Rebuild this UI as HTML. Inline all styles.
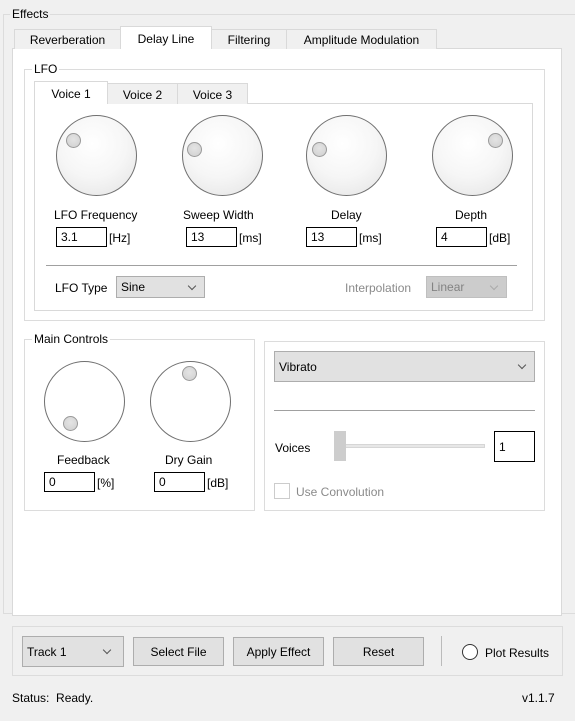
<!DOCTYPE html><html><head><style>
body{margin:0;width:575px;height:721px;background:#f0f0f0;font-family:"Liberation Sans",sans-serif;font-size:12px;color:#000;position:relative;overflow:hidden}
.a{position:absolute;box-sizing:border-box}
.t{position:absolute;white-space:nowrap}
.tab{position:absolute;box-sizing:border-box;border:1px solid #d9d9d9;border-bottom:none;background:#f0f0f0;text-align:center;line-height:20px}
.knob{position:absolute;border-radius:50%;border:1px solid #707070;box-sizing:border-box;background:radial-gradient(circle at 45% 35%,#fff 0%,#f6f6f6 50%,#e2e2e2 100%)}
.dot{position:absolute;width:15px;height:15px;border-radius:50%;border:1px solid #9a9a9a;box-sizing:border-box;background:radial-gradient(circle at 50% 40%,#e4e4e4,#cfcfcf)}
.in{position:absolute;box-sizing:border-box;border:1px solid #000;background:#fff;padding-left:4px;line-height:18px}
.cb{position:absolute;box-sizing:border-box;border:1px solid #adadad;background:#e1e1e1;padding-left:4px}
.btn{position:absolute;box-sizing:border-box;border:1px solid #adadad;background:#e1e1e1;text-align:center}
.chev{position:absolute;width:5px;height:5px;border-right:1px solid #555;border-bottom:1px solid #555;transform:rotate(45deg)}
</style></head><body>
<div class="a" style="left:3px;top:14px;width:580px;height:600px;border:1px solid #dcdcdc"></div>
<div class="t" style="left:10px;top:7px;background:#f0f0f0;padding:0 2px">Effects</div>
<div class="a" style="left:12px;top:48px;width:550px;height:568px;background:#fff;border:1px solid #d9d9d9"></div>
<div class="tab" style="left:14px;top:29px;width:107px;height:20px">Reverberation</div>
<div class="tab" style="left:120px;top:26px;width:92px;height:23px;background:#fff;line-height:25px">Delay Line</div>
<div class="tab" style="left:211px;top:29px;width:76px;height:20px">Filtering</div>
<div class="tab" style="left:286px;top:29px;width:151px;height:20px">Amplitude Modulation</div>
<div class="a" style="left:24px;top:69px;width:521px;height:252px;border:1px solid #dcdcdc"></div>
<div class="t" style="left:32px;top:62px;background:#fff;padding:0 2px">LFO</div>
<div class="a" style="left:34px;top:103px;width:499px;height:208px;border:1px solid #d9d9d9;border-top:1px solid #d9d9d9"></div>
<div class="tab" style="left:107px;top:83px;width:71px;height:21px;line-height:22px">Voice 2</div>
<div class="tab" style="left:177px;top:83px;width:71px;height:21px;line-height:22px">Voice 3</div>
<div class="tab" style="left:34px;top:81px;width:74px;height:23px;background:#fff;line-height:25px">Voice 1</div>
<div class="knob" style="left:56px;top:115px;width:81px;height:81px"></div><div class="dot" style="left:66px;top:133px"></div>
<div class="knob" style="left:182px;top:115px;width:81px;height:81px"></div><div class="dot" style="left:187px;top:142px"></div>
<div class="knob" style="left:306px;top:115px;width:81px;height:81px"></div><div class="dot" style="left:312px;top:142px"></div>
<div class="knob" style="left:432px;top:115px;width:81px;height:81px"></div><div class="dot" style="left:488px;top:133px"></div>
<div class="t" style="left:54px;top:208px">LFO Frequency</div>
<div class="t" style="left:183px;top:208px">Sweep Width</div>
<div class="t" style="left:331px;top:208px">Delay</div>
<div class="t" style="left:455px;top:208px">Depth</div>
<div class="in" style="left:56px;top:227px;width:51px;height:20px">3.1</div><div class="t" style="left:109px;top:231px">[Hz]</div>
<div class="in" style="left:186px;top:227px;width:51px;height:20px">13</div><div class="t" style="left:239px;top:231px">[ms]</div>
<div class="in" style="left:306px;top:227px;width:51px;height:20px">13</div><div class="t" style="left:359px;top:231px">[ms]</div>
<div class="in" style="left:436px;top:227px;width:51px;height:20px">4</div><div class="t" style="left:489px;top:231px">[dB]</div>
<div class="a" style="left:46px;top:265px;width:471px;height:1px;background:#a0a0a0"></div>
<div class="t" style="left:55px;top:281px">LFO Type</div>
<div class="cb" style="left:116px;top:276px;width:89px;height:22px;line-height:20px">Sine</div><div class="chev" style="left:189px;top:283px"></div>
<div class="t" style="left:345px;top:281px;color:#8a8a8a">Interpolation</div>
<div class="cb" style="left:426px;top:276px;width:81px;height:22px;line-height:20px;background:#ccc;border-color:#bfbfbf;color:#838383">Linear</div><div class="chev" style="left:491px;top:283px;border-color:#aaa"></div>
<div class="a" style="left:24px;top:339px;width:231px;height:172px;border:1px solid #dcdcdc"></div>
<div class="t" style="left:32px;top:332px;background:#fff;padding:0 2px">Main Controls</div>
<div class="a" style="left:44px;top:361px;width:81px;height:81px;border-radius:50%;border:1px solid #707070"></div><div class="dot" style="left:63px;top:416px"></div>
<div class="a" style="left:150px;top:361px;width:81px;height:81px;border-radius:50%;border:1px solid #707070"></div><div class="dot" style="left:182px;top:366px"></div>
<div class="t" style="left:57px;top:453px">Feedback</div>
<div class="t" style="left:165px;top:453px">Dry Gain</div>
<div class="in" style="left:44px;top:472px;width:51px;height:20px">0</div><div class="t" style="left:97px;top:476px">[%]</div>
<div class="in" style="left:154px;top:472px;width:51px;height:20px">0</div><div class="t" style="left:207px;top:476px">[dB]</div>
<div class="a" style="left:264px;top:341px;width:281px;height:170px;border:1px solid #dcdcdc"></div>
<div class="cb" style="left:274px;top:351px;width:261px;height:31px;line-height:31px">Vibrato</div><div class="chev" style="left:519px;top:362px"></div>
<div class="a" style="left:274px;top:410px;width:261px;height:1px;background:#a0a0a0"></div>
<div class="t" style="left:275px;top:441px">Voices</div>
<div class="a" style="left:340px;top:444px;width:145px;height:4px;background:#e7e7e7;border:1px solid #d6d6d6"></div>
<div class="a" style="left:334px;top:431px;width:12px;height:30px;background:#cdcdcd"></div>
<div class="in" style="left:494px;top:431px;width:41px;height:31px;line-height:31px">1</div>
<div class="a" style="left:274px;top:483px;width:16px;height:16px;border:1px solid #ccc;background:#fff"></div>
<div class="t" style="left:296px;top:485px;color:#8a8a8a">Use Convolution</div>
<div class="a" style="left:12px;top:626px;width:551px;height:50px;border:1px solid #dcdcdc"></div>
<div class="cb" style="left:22px;top:636px;width:102px;height:31px;line-height:31px">Track 1</div><div class="chev" style="left:104px;top:647px"></div>
<div class="btn" style="left:133px;top:637px;width:91px;height:29px;line-height:29px">Select File</div>
<div class="btn" style="left:233px;top:637px;width:91px;height:29px;line-height:29px">Apply Effect</div>
<div class="btn" style="left:333px;top:637px;width:91px;height:29px;line-height:29px">Reset</div>
<div class="a" style="left:441px;top:636px;width:1px;height:30px;background:#bbb"></div>
<div class="a" style="left:462px;top:644px;width:16px;height:16px;border-radius:50%;border:1px solid #333;background:#fff"></div>
<div class="t" style="left:485px;top:646px">Plot Results</div>
<div class="t" style="left:12px;top:691px">Status:&nbsp; Ready.</div>
<div class="t" style="left:522px;top:691px">v1.1.7</div>
</body></html>
